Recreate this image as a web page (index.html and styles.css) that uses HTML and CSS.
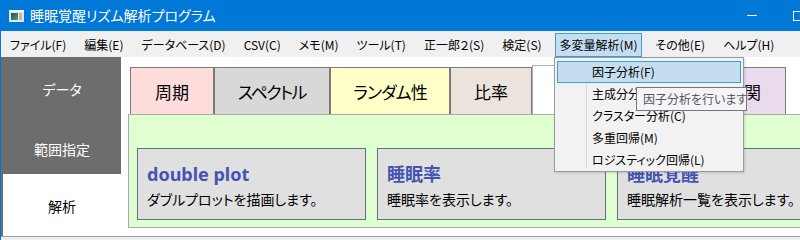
FILE: index.html
```html
<!DOCTYPE html>
<html lang="ja">
<head>
<meta charset="utf-8">
<title>睡眠覚醒リズム解析プログラム</title>
<link rel="stylesheet" href="styles.css">
</head>
<body>
<div class="window">
  <header class="titlebar">
    <svg class="app-icon" width="15" height="12" viewBox="0 0 15 12">
      <defs>
        <linearGradient id="g" x1="0" y1="0" x2="1" y2="1">
          <stop offset="0" stop-color="#1f5a43"/>
          <stop offset="1" stop-color="#4d9a86"/>
        </linearGradient>
      </defs>
      <rect x="0" y="0" width="15" height="12" fill="#e4e4e4"/>
      <rect x="0" y="0" width="15" height="2" fill="#f6f6f6"/>
      <rect x="2" y="3" width="7" height="7" fill="url(#g)"/>
      <rect x="10" y="3" width="3" height="7" fill="#b9b9b9"/>
    </svg>
    <span class="title">睡眠覚醒リズム解析プログラム</span>
    <div class="caption-buttons">
      <span class="cap-btn"><span class="glyph-min"></span></span>
      <span class="cap-btn"><span class="glyph-max"></span></span>
      <span class="cap-btn"><span class="glyph-close">✕</span></span>
    </div>
  </header>

  <nav class="menubar">
    <span class="menu-item">ファイル(F)</span>
    <span class="menu-item">編集(E)</span>
    <span class="menu-item">データベース(D)</span>
    <span class="menu-item">CSV(C)</span>
    <span class="menu-item">メモ(M)</span>
    <span class="menu-item">ツール(T)</span>
    <span class="menu-item">正一郎２(S)</span>
    <span class="menu-item">検定(S)</span>
    <span class="menu-item is-open">多変量解析(M)</span>
    <span class="menu-item">その他(E)</span>
    <span class="menu-item">ヘルプ(H)</span>
  </nav>

  <div class="client">
    <aside class="sidebar">
      <div class="side-btn side-btn--data">データ</div>
      <div class="side-btn side-btn--range">範囲指定</div>
      <div class="side-btn side-btn--active">解析</div>
    </aside>

    <main class="main">
      <div class="tabs">
        <div class="tab tab--period">周期</div>
        <div class="tab tab--spectrum">スペクトル</div>
        <div class="tab tab--random">ランダム性</div>
        <div class="tab tab--ratio">比率</div>
        <div class="tab tab--selected">分布</div>
        <div class="tab tab--hidden">回帰</div>
        <div class="tab tab--corr">相関</div>
      </div>
      <section class="panel">
        <div class="card">
          <div class="card-title">double plot</div>
          <div class="card-desc">ダブルプロットを描画します。</div>
        </div>
        <div class="card">
          <div class="card-title">睡眠率</div>
          <div class="card-desc">睡眠率を表示します。</div>
        </div>
        <div class="card">
          <div class="card-title">睡眠覚醒</div>
          <div class="card-desc">睡眠解析一覧を表示します。</div>
        </div>
      </section>
    </main>
  </div>

  <div class="statusbar"></div>

  <div class="dropdown">
    <div class="dd-item is-hover">因子分析(F)</div>
    <div class="dd-item">主成分分析(P)</div>
    <div class="dd-item">クラスター分析(C)</div>
    <div class="dd-item">多重回帰(M)</div>
    <div class="dd-item">ロジスティック回帰(L)</div>
  </div>
  <div class="tooltip">因子分析を行います</div>
</div>
</body>
</html>
```
FILE: styles.css
```css
html, body {
  margin: 0;
  padding: 0;
  overflow: hidden;
}

body {
  width: 800px;
  height: 240px;
  font-family: "Noto Sans CJK JP", sans-serif;
  font-feature-settings: "palt";
  color: #000;
}

.window {
  position: relative;
  width: 868px;
  height: 240px;
  box-sizing: border-box;
  border-left: 1px solid #0078d7;
  border-right: 1px solid #0078d7;
  background: #f0f0f0;
  display: flex;
  flex-direction: column;
}

/* title bar */
.titlebar {
  flex: none;
  height: 31px;
  background: #0078d7;
  color: #fff;
  display: flex;
  align-items: center;
}

.app-icon {
  flex: none;
  margin-left: 8px;
}

.title {
  margin-left: 6px;
  font-size: 14px;
  line-height: 31px;
}

.caption-buttons {
  margin-left: auto;
  display: flex;
  height: 31px;
}

.cap-btn {
  width: 46px;
  height: 31px;
  display: flex;
  align-items: center;
  justify-content: center;
}

.glyph-min {
  width: 10px;
  height: 1px;
  background: #fff;
}

.glyph-max {
  width: 8px;
  height: 8px;
  border: 1px solid #fff;
}

.glyph-close {
  font-size: 12px;
  color: #fff;
}

/* menu bar */
.menubar {
  flex: none;
  height: 26px;
  background: #f0f0f0;
  display: flex;
  gap: 8px;
  padding-left: 4px;
}

.menu-item {
  height: 24px;
  margin-top: 2px;
  box-sizing: border-box;
  padding: 0 4px;
  border: 1px solid transparent;
  font-size: 12px;
  line-height: 22px;
  white-space: nowrap;
}

.menu-item.is-open {
  background: #c4def0;
  border-color: #3d9fd8;
}

/* client area */
.client {
  flex: none;
  height: 179px;
  display: flex;
  background: #fff;
}

.sidebar {
  flex: none;
  width: 120px;
  background: #6d6d6d;
  display: flex;
  flex-direction: column;
}

.side-btn {
  margin-left: 2px;
  box-sizing: border-box;
  padding-top: 24px;
  color: #fff;
  font-size: 14px;
  line-height: 16px;
  text-align: center;
}

.side-btn--data { height: 60px; }
.side-btn--range { height: 57px; }

.side-btn--active {
  height: 62px;
  background: #fff;
  color: #000;
}

.main {
  flex: 1;
  display: flex;
  flex-direction: column;
  background: #fff;
}

.tabs {
  flex: none;
  height: 57px;
  margin-left: 9px;
  display: flex;
  align-items: flex-end;
}

.tab {
  flex: none;
  height: 47px;
  box-sizing: border-box;
  border: 1px solid #7a7a7a;
  border-bottom: none;
  display: flex;
  align-items: center;
  justify-content: center;
  font-size: 17px;
  white-space: nowrap;
}

.tab--period { width: 84px; background: #ffdcdc; }
.tab--spectrum { width: 116px; background: #d8d8d8; letter-spacing: -1.5px; }
.tab--random { width: 120px; background: #ffffc8; letter-spacing: -1px; }
.tab--ratio { width: 82px; background: #ece3dc; }
.tab--selected {
  width: 85px;
  height: 49px;
  background: #fff;
  border-color: #adadad;
}
.tab--hidden { width: 85px; background: #e0e0e0; }
.tab--corr { width: 84px; background: #eadaee; }

.panel {
  flex: none;
  height: 114px;
  margin-left: 7px;
  box-sizing: border-box;
  border: 1px solid #a9a9a9;
  background: #e0ffd0;
  display: flex;
  gap: 11px;
  padding: 33px 0 0 8px;
}

.card {
  flex: none;
  width: 229px;
  height: 72px;
  box-sizing: border-box;
  border: 1px solid #5f6f7f;
  background: #e0e0e0;
  padding: 13px 0 0 9px;
}

.card-title {
  font-family: "Noto Sans", "Noto Sans CJK JP", sans-serif;
  font-weight: bold;
  font-size: 18px;
  line-height: 24px;
  color: #4554b3;
  white-space: nowrap;
}

.card-desc {
  margin-top: 4px;
  font-size: 14px;
  line-height: 18px;
  white-space: nowrap;
}

.statusbar {
  flex: 1;
  border-top: 1px solid #a0a0a0;
  background: #f0f0f0;
}

/* open dropdown menu */
.dropdown {
  position: absolute;
  left: 553px;
  top: 57px;
  width: 190px;
  height: 115px;
  box-sizing: border-box;
  border: 1px solid #9a9a9a;
  background: #f2f2f2;
  padding: 3px 2px 0 2px;
  box-shadow: 1px 1px 2px rgba(0, 0, 0, 0.15);
}

.dropdown::before {
  content: "";
  position: absolute;
  left: 31px;
  top: 3px;
  bottom: 3px;
  width: 1px;
  background: #dadada;
}

.dd-item {
  position: relative;
  height: 22px;
  box-sizing: border-box;
  border: 1px solid transparent;
  padding-left: 34px;
  font-size: 12px;
  line-height: 20px;
  white-space: nowrap;
}

.dd-item.is-hover {
  background: #c4def0;
  border-color: #3d9fd8;
}

.tooltip {
  position: absolute;
  left: 635px;
  top: 87px;
  width: 111px;
  height: 24px;
  box-sizing: border-box;
  border: 1px solid #767676;
  background: #f4f4f9;
  color: #575757;
  font-size: 12px;
  line-height: 22px;
  padding-left: 6px;
  white-space: nowrap;
}
```
